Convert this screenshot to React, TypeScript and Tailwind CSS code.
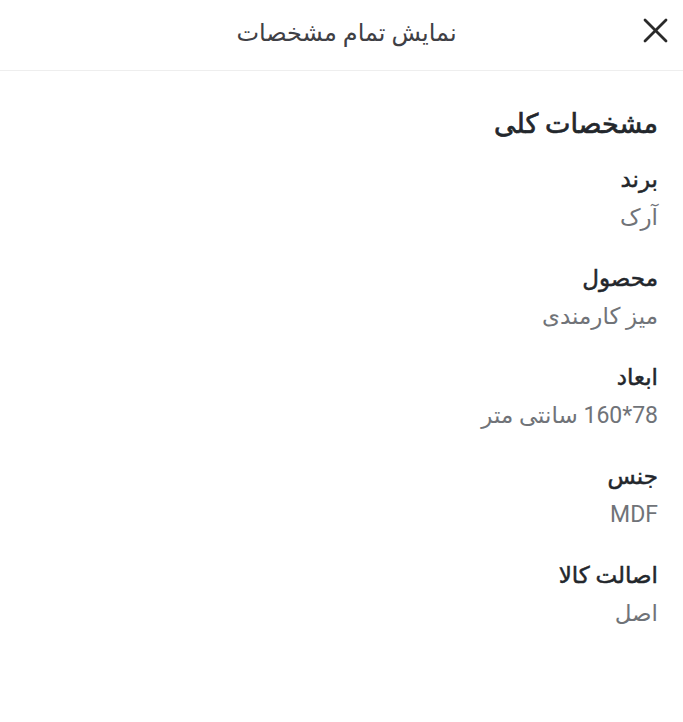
import type { ReactNode } from "react";

const specs: { label: string; value: ReactNode }[] = [
  { label: "برند", value: "آرک" },
  { label: "محصول", value: "میز کارمندی" },
  {
    label: "ابعاد",
    value: (
      <>
        <bdi dir="ltr">160*78</bdi> سانتی متر
      </>
    ),
  },
  { label: "جنس", value: "MDF" },
  { label: "اصالت کالا", value: "اصل" },
];

export default function App() {
  return (
    <div
      dir="rtl"
      className="min-h-screen bg-white text-[#23272c]"
      style={{ fontFamily: 'Roboto, "DejaVu Sans", sans-serif' }}
    >
      {/* هدر */}
      <div className="relative flex h-[71px] items-center justify-center border-b border-[#eeeeee] pl-[10px]">
        <span className="-mt-[5px] text-[24px] leading-[34px] text-[#3f4045]">نمایش تمام مشخصات</span>
        <button className="absolute right-[15px] top-[18px] text-[#2a2a2a]">
          <svg width="25" height="25" viewBox="0 0 25 25" fill="none" stroke="currentColor" strokeWidth="2.8" strokeLinecap="round">
            <path d="M2 2L23 23" />
            <path d="M23 2L2 23" />
          </svg>
        </button>
      </div>

      {/* مشخصات */}
      <div className="px-[25px] pt-[31px]">
        <h2 className="text-[27px] font-normal leading-[44px] text-[#23272c] [-webkit-text-stroke:0.7px_#23272c]">
          مشخصات کلی
        </h2>
        <div className="mt-[15px] flex flex-col gap-[23px]">
          {specs.map((s) => (
            <div key={s.label} className="flex flex-col">
              <div className="text-[23px] leading-[38px] text-[#23272c] [-webkit-text-stroke:0.5px_#23272c]">
                {s.label}
              </div>
              <div className="text-[23px] leading-[38px] text-[#707378]">{s.value}</div>
            </div>
          ))}
        </div>
      </div>
    </div>
  );
}
